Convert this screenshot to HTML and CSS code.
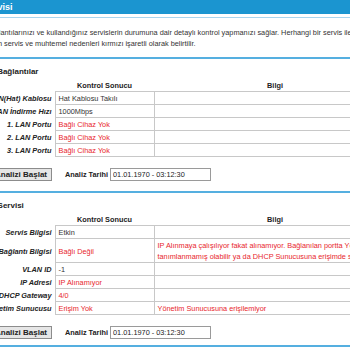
FILE: index.html
```html
<!DOCTYPE html>
<html lang="tr">
<head>
    <meta charset="UTF-8">
    <title>Analiz Servisi</title>
    <link rel="stylesheet" href="styles.css">
</head>
<body>
    <div class="page">
        <div class="title-bar">Analiz Servisi</div>
        <div class="title-line"></div>

        <p class="intro">
            Bu sayfa, bağlantılarınızı ve kullandığınız servislerin durumuna dair detaylı kontrol yapmanızı sağlar. Herhangi bir servis ile ilgili sorun olması durumunda<br>
            sorun yaşanan servis ve muhtemel nedenleri kırmızı işaretli olarak belirtilir.
        </p>

        <!-- Fiziksel baglantilar -->
        <section class="block">
            <h3>Fiziksel Bağlantılar</h3>
            <table class="check-table">
                <thead>
                    <tr><th></th><th>Kontrol Sonucu</th><th>Bilgi</th></tr>
                </thead>
                <tbody>
                    <tr><td class="label">WAN(Hat) Kablosu</td><td>Hat Kablosu Takılı</td><td></td></tr>
                    <tr><td class="label">WAN İndirme Hızı</td><td>1000Mbps</td><td></td></tr>
                    <tr><td class="label">1. LAN Portu</td><td class="error">Bağlı Cihaz Yok</td><td></td></tr>
                    <tr><td class="label">2. LAN Portu</td><td class="error">Bağlı Cihaz Yok</td><td></td></tr>
                    <tr><td class="label">3. LAN Portu</td><td class="error">Bağlı Cihaz Yok</td><td></td></tr>
                </tbody>
            </table>
            <div class="actions">
                <button type="button">Analizi Başlat</button>
                <span class="date-label">Analiz Tarihi</span>
                <input type="text" value="01.01.1970 - 03:12:30" readonly>
            </div>
        </section>

        <!-- Internet servisi -->
        <section class="block">
            <h3>İnternet Servisi</h3>
            <table class="check-table">
                <thead>
                    <tr><th></th><th>Kontrol Sonucu</th><th>Bilgi</th></tr>
                </thead>
                <tbody>
                    <tr><td class="label">Servis Bilgisi</td><td>Etkin</td><td></td></tr>
                    <tr>
                        <td class="label">Bağlantı Bilgisi</td>
                        <td class="error">Bağlı Değil</td>
                        <td class="error">IP Alınmaya çalışılıyor fakat alınamıyor. Bağlanılan portta Yönetim tanımlanmamış olabilir ya da DHCP Sunucusuna erişimde sorun var.</td>
                    </tr>
                    <tr><td class="label">VLAN ID</td><td>-1</td><td></td></tr>
                    <tr><td class="label">IP Adresi</td><td class="error">IP Alınamıyor</td><td></td></tr>
                    <tr><td class="label">DHCP Gateway</td><td class="error">4/0</td><td></td></tr>
                    <tr><td class="label">Yönetim Sunucusu</td><td class="error">Erişim Yok</td><td class="error">Yönetim Sunucusuna erişilemiyor</td></tr>
                </tbody>
            </table>
            <div class="actions">
                <button type="button">Analizi Başlat</button>
                <span class="date-label">Analiz Tarihi</span>
                <input type="text" value="01.01.1970 - 03:12:30" readonly>
            </div>
        </section>
        <div class="page-end"></div>
    </div>
</body>
</html>
```

FILE: styles.css
```css
/* Reset */
* {
    margin: 0;
    padding: 0;
    box-sizing: border-box;
}

body {
    background-color: #fff;
    color: #333;
    font-family: "Liberation Sans", Arial, sans-serif;
    font-size: 7.33px;
    overflow: hidden;
}

/* page is scrolled a little to the right */
.page {
    width: 460px;
    margin-left: -46px;
}

/* Title */
.title-bar {
    background-color: #1b95d0;
    color: #fff;
    font-weight: bold;
    font-size: 9px;
    height: 14px;
    line-height: 14px;
}

.title-line {
    height: 1px;
    margin-top: 3px;
    background-color: #a9d5ee;
}

.intro {
    padding: 9px 0 8px;
    line-height: 11px;
    white-space: nowrap;
}

/* Sections */
.block {
    border-top: 2px solid #55afe0;
    padding-bottom: 10px;
}

.block:last-of-type {
    padding-bottom: 6px;
}

.page-end {
    border-top: 2px solid #55afe0;
}

.block h3 {
    font-size: 8px;
    font-weight: bold;
    line-height: 11px;
    padding: 7px 0 0 12px;
    color: #222;
}

/* Tables */
.check-table {
    width: 442px;
    border-collapse: collapse;
}

.check-table th {
    font-weight: bold;
    line-height: 11px;
    padding: 3px 0 0;
    border-bottom: 1px solid #c8c8c8;
    color: #222;
}

.check-table th:first-child {
    border-bottom: none;
}

.check-table td {
    line-height: 11px;
    padding: 1px 3px 0;
    border-bottom: 1px solid #c8c8c8;
    border-left: 1px solid #c8c8c8;
    vertical-align: middle;
}

.check-table td.label {
    width: 101px;
    text-align: right;
    font-weight: bold;
    font-style: italic;
    color: #222;
    border: none;
    padding-right: 3px;
}

.check-table td:nth-child(2) {
    width: 99px;
}

.check-table td.error {
    color: #e8262d;
}

/* Buttons row */
.actions {
    display: flex;
    align-items: center;
    margin-top: 11px;
    padding-left: 36px;
}

.actions button {
    width: 62px;
    height: 13px;
    background-color: #e6e6e6;
    border: 1px solid #8c8c8c;
    font-family: inherit;
    font-size: 8px;
    font-weight: bold;
    color: #222;
}

.date-label {
    margin: 0 2px 0 13px;
    font-weight: bold;
    color: #222;
}

.actions input {
    width: 101px;
    height: 13px;
    border: 1px solid #9a9a9a;
    padding: 0 2px;
    font-family: inherit;
    font-size: 7.33px;
    color: #222;
}
```
